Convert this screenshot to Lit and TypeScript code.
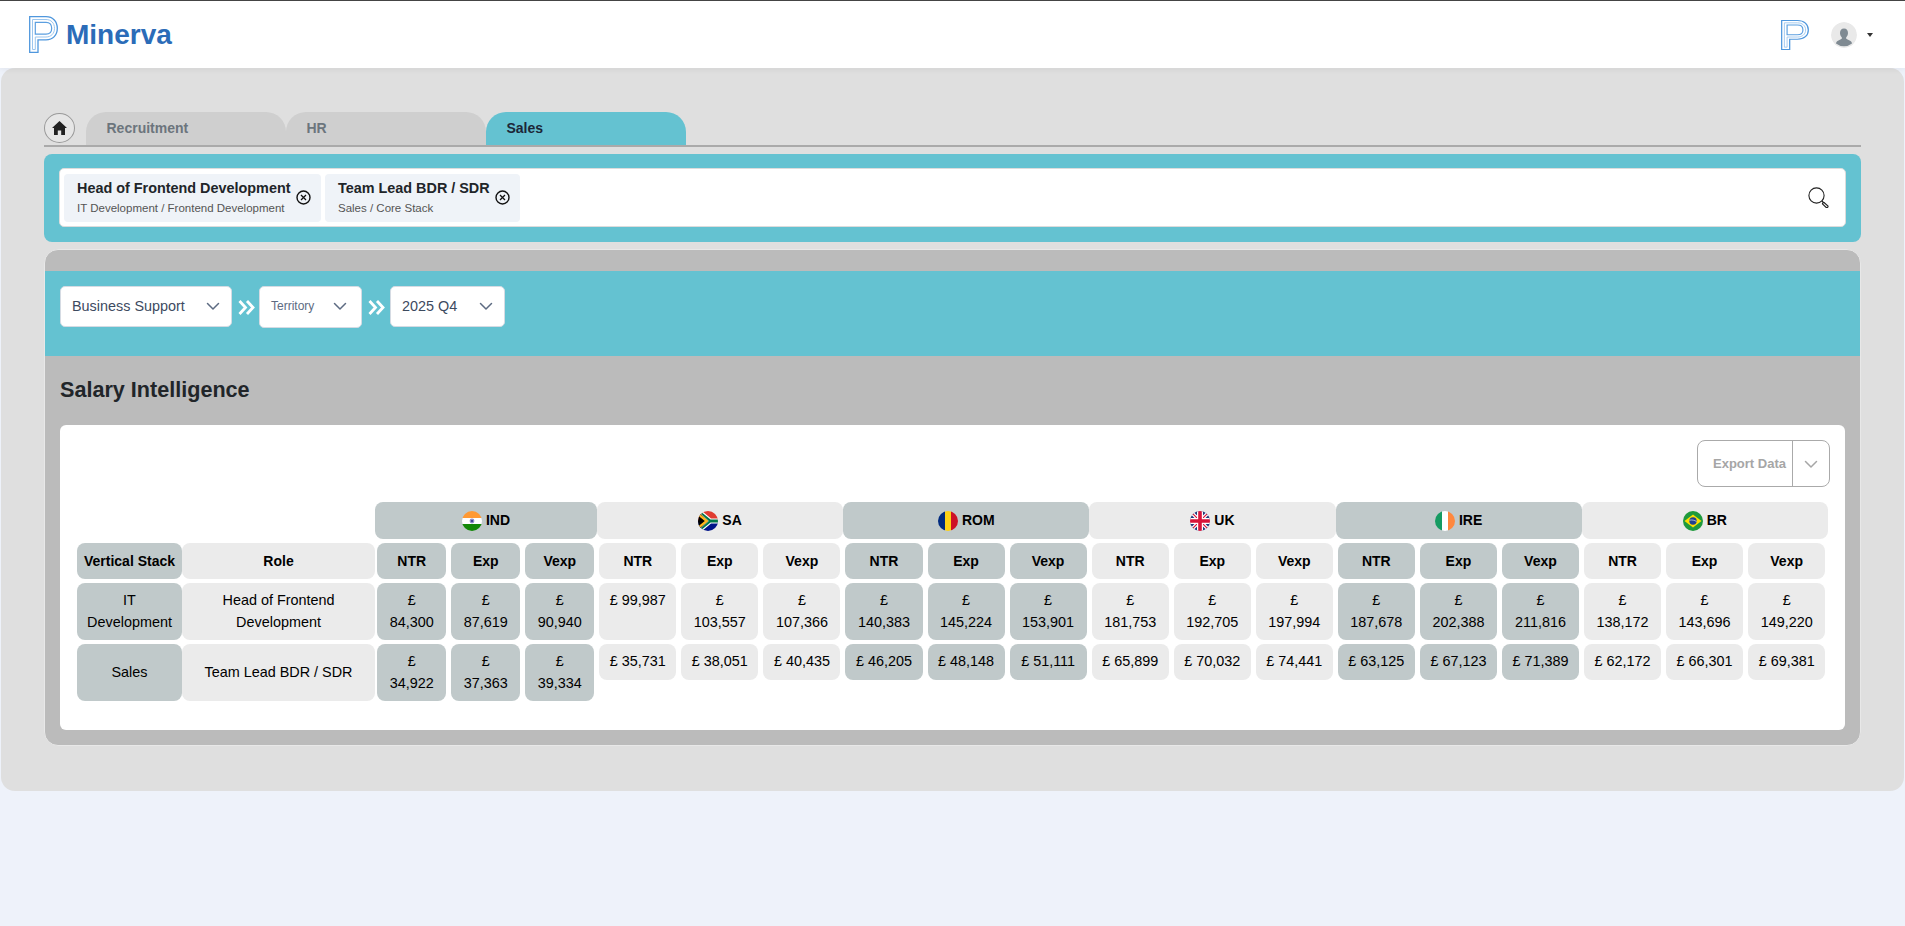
import { LitElement, html, css, svg } from 'lit';
import { customElement } from 'lit/decorators.js';

type Country = { code: string; flag: unknown; tint: boolean; first?: boolean };

const flags = {
  IND: svg`<rect width="20" height="7" fill="#ff9933"/><rect y="7" width="20" height="6" fill="#fff"/><rect y="13" width="20" height="7" fill="#138808"/><circle cx="10" cy="10" r="2.4" fill="#8f8fc8"/><circle cx="10" cy="10" r="1" fill="#2b2b86"/>`,
  SA: svg`<rect width="20" height="10" fill="#e03c31"/><rect y="10" width="20" height="10" fill="#001489"/><path d="M0 0 10 10 0 20Z" fill="#000"/><path d="M0 0h4l9 7.5h7v5h-7l-9 7.5H0l10-10Z" fill="#fff"/><path d="M0 1.5 10.500 10 0 18.500V15.500L6.800 10 0 4.500Z" fill="#ffb81c"/><path d="M2 0 12.500 8.500H20v3h-7.500L2 20H0l10.800-10L0 0Z" fill="#007749"/>`,
  ROM: svg`<rect width="7" height="20" fill="#002b7f"/><rect x="7" width="6" height="20" fill="#fcd116"/><rect x="13" width="7" height="20" fill="#ce1126"/>`,
  UK: svg`<rect width="20" height="20" fill="#1f3a7d"/><path d="M0 0 20 20M20 0 0 20" stroke="#fff" stroke-width="3.600"/><path d="M0 0 20 20M20 0 0 20" stroke="#d8143a" stroke-width="1.200"/><path d="M10 0v20M0 10h20" stroke="#fff" stroke-width="6"/><path d="M10 0v20M0 10h20" stroke="#d8143a" stroke-width="3.600"/>`,
  IRE: svg`<rect width="7" height="20" fill="#169b62"/><rect x="7" width="6" height="20" fill="#fff"/><rect x="13" width="7" height="20" fill="#ff883e"/>`,
  BR: svg`<rect width="20" height="20" fill="#1f9a3c"/><path d="M10 3.500 18.500 10 10 16.500 1.500 10Z" fill="#fedf00"/><circle cx="10" cy="10" r="3.700" fill="#23408f"/><path d="M6.500 9.200c2.500-.5 5-.1 7 1.300" stroke="#fff" stroke-width=".6" fill="none"/>`,
};

const countries: Country[] = [
  { code: 'IND', flag: flags.IND, tint: true, first: true },
  { code: 'SA', flag: flags.SA, tint: false },
  { code: 'ROM', flag: flags.ROM, tint: true },
  { code: 'UK', flag: flags.UK, tint: false },
  { code: 'IRE', flag: flags.IRE, tint: true },
  { code: 'BR', flag: flags.BR, tint: false },
];

const rows = [
  {
    stack: 'IT Development',
    role: 'Head of Frontend Development',
    hug: false,
    values: ['84,300', '87,619', '90,940', '99,987', '103,557', '107,366', '140,383', '145,224', '153,901', '181,753', '192,705', '197,994', '187,678', '202,388', '211,816', '138,172', '143,696', '149,220'],
  },
  {
    stack: 'Sales',
    role: 'Team Lead BDR / SDR',
    hug: true,
    values: ['34,922', '37,363', '39,334', '35,731', '38,051', '40,435', '46,205', '48,148', '51,111', '65,899', '70,032', '74,441', '63,125', '67,123', '71,389', '62,172', '66,301', '69,381'],
  },
];

const logo = (w: number, h: number) => html`<svg width=${w} height=${h} viewBox="0 0 29 37" preserveAspectRatio="none" fill="none">
  <path d="M.7.7H17c7 0 11.300 4.800 11.300 11.600S24 23.800 17 23.800H9v12.500H.7Z" stroke="#4f97dd" stroke-width="1.300"/>
  <path d="M3.500 33.500V3.500H17c5 0 8.500 3.500 8.500 8.800S22 21 17 21H6.300v12.500Z" stroke="#9cc6ee" stroke-width="1"/>
  <path d="M6.300 6.300H17c3.500 0 5.700 2.400 5.700 6s-2.200 5.900-5.700 5.900H6.300Z" stroke="#5b9fe0" stroke-width="1.200"/>
</svg>`;

const chevron = html`<svg class="chev" width="16" height="16" viewBox="0 0 16 16" fill="none"><path d="m2.500 5.500 5.500 5.500 5.500-5.500" stroke="currentColor" stroke-width="1.500" stroke-linecap="round" stroke-linejoin="round"/></svg>`;

const arrows = (wide = false) => html`<svg class="arrows ${wide ? 'wide' : ''}" width="17" height="15" viewBox="0 0 17 15" fill="none"><path d="m1.500 1 6 6.500-6 6.500M9 1l6 6.500L9 14" stroke="#fff" stroke-width="2.800"/></svg>`;

const closeIcon = html`<svg class="close" width="15" height="15" viewBox="0 0 15 15" fill="none"><circle cx="7.500" cy="7.500" r="6.500" stroke="#111" stroke-width="1.400"/><path d="m5 5 5 5m0-5-5 5" stroke="#111" stroke-width="1.300"/></svg>`;

@customElement('app-root')
export class AppRoot extends LitElement {
  static styles = css`
    :host {
      display: block;
      min-height: 926px;
      background: #eef2fa;
      font-family: 'Liberation Sans', Arial, sans-serif;
      color: #212529;
    }

    /* top bar */
    .topbar {
      position: relative;
      display: flex;
      align-items: center;
      justify-content: space-between;
      height: 68px;
      box-sizing: border-box;
      border-top: 1px solid #444;
      padding: 0 32px 0 29px;
      background: #fff;
      box-shadow: 0 2px 6px rgba(0, 0, 0, 0.05);
    }
    .brand {
      display: flex;
      align-items: center;
      gap: 8px;
      font-size: 28px;
      font-weight: 700;
      color: #2b6cb8;
    }
    .user {
      display: flex;
      align-items: center;
    }
    .avatar {
      margin-left: 22px;
      border-radius: 50%;
    }
    .caret {
      width: 0;
      height: 0;
      margin-left: 10px;
      border: 3px solid transparent;
      border-top: 4px solid #333;
      border-bottom: 0;
    }

    /* main panel */
    .main {
      margin: 0 1px;
      padding: 44px 43px 45px;
      background: #dfdfdf;
      border-radius: 14px;
    }
    .tabs {
      display: flex;
      align-items: flex-end;
      height: 33px;
      border-bottom: 2px solid #aaa;
    }
    .home {
      display: flex;
      align-items: center;
      justify-content: center;
      width: 31px;
      height: 30px;
      box-sizing: border-box;
      margin: 0 11px 2px 0;
      border: 1px solid #999;
      border-radius: 50%;
      background: #e6e6e6;
    }
    .tab {
      width: 200px;
      height: 33px;
      box-sizing: border-box;
      padding: 0 20.5px;
      border-radius: 20px 20px 0 0;
      background: #cfcfcf;
      color: #6c757d;
      font-size: 14px;
      font-weight: 700;
      line-height: 32px;
    }
    .tab.active {
      background: #64c2d1;
      color: #1c2738;
    }

    .search {
      margin-top: 7px;
      padding: 14px 15px 15px;
      background: #64c2d1;
      border-radius: 8px;
    }
    .search-box {
      display: flex;
      align-items: center;
      gap: 4px;
      height: 59px;
      box-sizing: border-box;
      padding: 0 15px 0 4px;
      background: #fff;
      border: 1px solid #dcdcdc;
      border-radius: 5px;
    }
    .chip {
      display: flex;
      align-items: center;
      gap: 5.5px;
      height: 48px;
      box-sizing: border-box;
      padding: 0 10px 0 13px;
      background: #eff3f8;
      border-radius: 4px;
    }
    .chip b {
      display: block;
      font-size: 14.4px;
      line-height: 20px;
      color: #212529;
    }
    .chip span {
      display: block;
      font-size: 11.5px;
      line-height: 20px;
      color: #555;
    }
    .glass {
      margin-left: auto;
    }

    /* salary panel */
    .panel {
      margin-top: 7px;
      padding-top: 21px;
      background: #bbb;
      border: 1px solid #e8e8e8;
      border-radius: 14px;
      overflow: hidden;
    }
    .filters {
      display: flex;
      align-items: flex-start;
      height: 85px;
      box-sizing: border-box;
      padding: 15px;
      background: #64c2d1;
    }
    .select {
      display: flex;
      align-items: center;
      justify-content: space-between;
      height: 41px;
      box-sizing: border-box;
      padding: 0 10px 2px 11px;
      background: #fff;
      border: 1px solid #d5dbe3;
      border-radius: 5px;
      color: #3d4a5f;
      font-size: 14.4px;
    }
    .select.small {
      height: 42px;
      padding-right: 13px;
      color: #5d6b82;
      font-size: 12px;
    }
    .chev {
      color: #5d6b82;
    }
    .arrows {
      margin: 14px 4px 0 6px;
    }
    .arrows.wide {
      margin-right: 5px;
    }
    .panel h2 {
      display: flex;
      align-items: center;
      height: 69px;
      margin: 0;
      padding: 0 15px 2px;
      box-sizing: border-box;
      font-size: 21.6px;
      font-weight: 700;
      color: #212529;
    }
    .card {
      margin: 0 15px 15px;
      padding: 15px 15px 29px 17px;
      background: #fff;
      border-radius: 6px;
    }
    .actions {
      display: flex;
      justify-content: flex-end;
      margin-bottom: 15px;
    }
    .export {
      display: flex;
      align-items: stretch;
      height: 47px;
      box-sizing: border-box;
      border: 1px solid #aaa;
      border-radius: 8px;
      color: #a6a6a6;
      font-size: 13px;
      font-weight: 700;
    }
    .export span {
      display: flex;
      align-items: center;
      padding: 0 6px 0 15px;
      border-right: 1px solid #aaa;
    }
    .export i {
      display: flex;
      align-items: center;
      padding: 0 10px;
    }
    .export .chev {
      color: #a6a6a6;
    }

    /* table */
    .table {
      display: grid;
      grid-template-columns: 105px 193px repeat(3, 74px) repeat(15, 82.07px);
      row-gap: 4px;
      color: #000;
      font-size: 14.4px;
      line-height: 21.6px;
      text-align: center;
    }
    .cell {
      padding: 7px 8px;
      border-radius: 8px;
      background: #ebebeb;
    }
    .tint {
      background: #c0c9ca;
    }
    .val {
      margin: 0 2.75px 0 2.25px;
    }
    .hug {
      align-self: start;
    }
    .mid {
      display: flex;
      align-items: center;
      justify-content: center;
    }
    .head {
      padding: 7.5px 5px;
      font-size: 14px;
      font-weight: 700;
      line-height: 21px;
    }
    .group {
      grid-column: span 3;
      display: flex;
      align-items: center;
      justify-content: center;
      gap: 4px;
      height: 37px;
      box-sizing: border-box;
      padding: 0;
      font-size: 14px;
      font-weight: 700;
    }
    .spacer {
      grid-column: span 2;
    }
    .flag {
      display: block;
      border-radius: 50%;
      overflow: hidden;
    }
  `;

  render() {
    return html`
      <header class="topbar">
        <div class="brand">${logo(29, 37)}<span>Minerva</span></div>
        <div class="user">
          ${logo(28, 30)}
          <svg class="avatar" width="26" height="26" viewBox="0 0 26 26">
            <circle cx="13" cy="13" r="13" fill="#e9e9e9"/>
            <path d="M13 6.500c-2.600 0-4 2-4 4.500 0 1.800.8 3.400 1.800 4.300v1.500L6.500 19c-.9.500-1.300 1.300-1.500 2.500a13 13 0 0 0 16 0c-.2-1.200-.6-2-1.500-2.500l-4.300-2.200v-1.500c1-.9 1.800-2.500 1.800-4.300 0-2.500-1.400-4.500-4-4.500Z" fill="#7f8a92"/>
          </svg>
          <span class="caret"></span>
        </div>
      </header>

      <main class="main">
        <nav class="tabs">
          <span class="home">
            <svg width="15" height="14" viewBox="0 0 15 14"><path d="M7.500 0 15 7h-2v7H9.200V9.500H5.800V14H2V7H0Z" fill="#222"/></svg>
          </span>
          <div class="tab">Recruitment</div>
          <div class="tab">HR</div>
          <div class="tab active">Sales</div>
        </nav>

        <section class="search">
          <div class="search-box">
            <div class="chip">
              <div><b>Head of Frontend Development</b><span>IT Development / Frontend Development</span></div>
              ${closeIcon}
            </div>
            <div class="chip">
              <div><b>Team Lead BDR / SDR</b><span>Sales / Core Stack</span></div>
              ${closeIcon}
            </div>
            <svg class="glass" width="22" height="21" viewBox="0 0 22 21" fill="none">
              <circle cx="8.500" cy="8.500" r="7.600" stroke="#222" stroke-width="1.100"/>
              <path d="M14 14l2 2" stroke="#222" stroke-width="1.100"/>
              <path d="M16 15.500l4 3.500a1.300 1.300 0 0 1-1.800 1.500l-3.700-3.500a1.200 1.200 0 0 1 1.500-1.500Z" stroke="#222" stroke-width="1.100"/>
            </svg>
          </div>
        </section>

        <section class="panel">
          <div class="filters">
            <div class="select" style="width:172px"><span>Business Support</span>${chevron}</div>
            ${arrows()}
            <div class="select small" style="width:103px"><span>Territory</span>${chevron}</div>
            ${arrows(true)}
            <div class="select" style="width:115px"><span>2025 Q4</span>${chevron}</div>
          </div>

          <h2>Salary Intelligence</h2>

          <div class="card">
            <div class="actions">
              <div class="export"><span>Export Data</span><i>${chevron}</i></div>
            </div>
            ${this.renderTable()}
          </div>
        </section>
      </main>
    `;
  }

  renderTable() {
    return html`
      <div class="table">
        <div class="spacer"></div>
        ${countries.map(
          (c) => html`<div class="cell group ${c.tint ? 'tint' : ''}">
            <svg class="flag" width="20" height="20" viewBox="0 0 20 20">${c.flag}</svg>
            <span>${c.code}</span>
          </div>`
        )}

        <div class="cell head tint">Vertical Stack</div>
        <div class="cell head">Role</div>
        ${countries.map((c) =>
          ['NTR', 'Exp', 'Vexp'].map(
            (h) => html`<div class="cell head val ${c.tint ? 'tint' : ''}">${h}</div>`
          )
        )}

        ${rows.map(
          (r) => html`
            <div class="cell mid tint">${r.stack}</div>
            <div class="cell mid">${r.role}</div>
            ${r.values.map(
              (v, i) => html`<div class="cell val ${r.hug ? 'hug' : ''} ${countries[Math.floor(i / 3)].tint ? 'tint' : ''}">£ ${v}</div>`
            )}
          `
        )}
      </div>
    `;
  }
}
